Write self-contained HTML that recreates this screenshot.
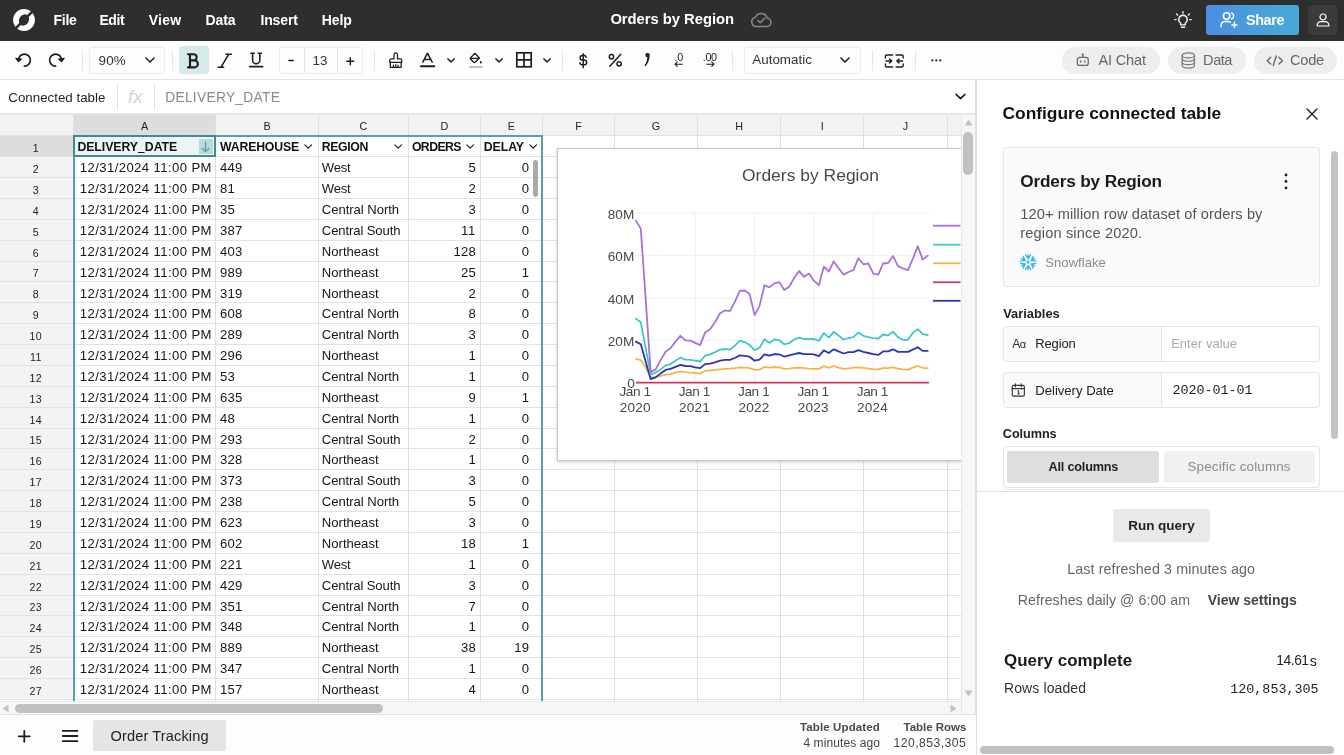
<!DOCTYPE html>
<html><head><meta charset="utf-8"><title>Orders by Region</title>
<style>
*{box-sizing:border-box;margin:0;padding:0}
html,body{width:1344px;height:755px;overflow:hidden;background:#fff}
body{font-family:"Liberation Sans",sans-serif;color:#1b1b1b;position:relative;font-size:13px}
.abs{position:absolute}
.t{position:absolute;white-space:nowrap;line-height:1}
#topbar{position:absolute;left:0;top:0;width:1344px;height:40.500px;background:#2e2e2e}
#topbar .m{position:absolute;top:12px;color:#fff;font-weight:bold;font-size:14.5px;line-height:16px;white-space:nowrap}
#toolbar{position:absolute;left:0;top:41px;width:1344px;height:39px;background:#fdfdfd;border-bottom:1px solid #e3e3e3}
.sep{position:absolute;top:6px;width:1px;height:26px;background:#e4e4e4}
.box{position:absolute;top:6px;height:27px;border:1px solid #ebebeb;border-radius:3px;background:#fdfdfd}
.pill{position:absolute;top:6px;height:27px;border-radius:14px;background:#eeeeee;color:#666;font-size:15px}
svg{position:absolute;overflow:visible}
#fbar{position:absolute;left:0;top:80px;width:976px;height:35px;background:#fff}
#grid{position:absolute;left:0;top:114px;width:976px;height:601px;background:#fff;overflow:hidden}
.hl{position:absolute;left:0;height:1px;background:#e2e2e2}
.vl{position:absolute;width:1px;background:#dfdfdf}
.cell{position:absolute;white-space:nowrap;font-size:13.6px;line-height:1;color:#222}
.rn{position:absolute;left:0;width:73px;text-align:center;font-size:11.5px;line-height:1;color:#222;padding-left:0}
.ch{position:absolute;top:122px;font-size:11px;line-height:1;color:#222;text-align:center}
.hd{position:absolute;white-space:nowrap;font-size:13.4px;font-weight:bold;line-height:1;color:#111}
#panel{position:absolute;left:976px;top:80px;width:368px;height:675px;background:#fff;border-left:1px solid #dcdcdc}
#bbar{position:absolute;left:0;top:715px;width:976px;height:40px;background:#fdfdfd;border-top:1px solid #e1e1e1}
</style></head><body>
<div id="root" style="position:absolute;left:0;top:0;width:1344px;height:755px;will-change:transform">
<div id="topbar"><svg style="left:12.800px;top:8.700px" width="22" height="22" viewBox="-11 -11 22 22">
<circle cx="0" cy="0" r="10.9" fill="#fff"/><ellipse cx="0" cy="0" rx="4.800" ry="5.900" transform="rotate(30)" fill="#2e2e2e"/>
<path d="M-9.200 7.400 L7.400 -9.200 L9.200 -7.400 L-7.400 9.200 Z" fill="#2e2e2e"/></svg><div class="t" style="left:53.6px;top:12.75px;font-size:14px;font-weight:bold;letter-spacing:-0.279px;color:#fff;">File</div><div class="t" style="left:99.4px;top:12.75px;font-size:14px;font-weight:bold;letter-spacing:-0.386px;color:#fff;">Edit</div><div class="t" style="left:148.8px;top:12.75px;font-size:14px;font-weight:bold;letter-spacing:0.212px;color:#fff;">View</div><div class="t" style="left:205.6px;top:12.75px;font-size:14px;font-weight:bold;letter-spacing:-0.137px;color:#fff;">Data</div><div class="t" style="left:260.4px;top:12.75px;font-size:14px;font-weight:bold;letter-spacing:-0.104px;color:#fff;">Insert</div><div class="t" style="left:321.7px;top:12.75px;font-size:14px;font-weight:bold;letter-spacing:-0.035px;color:#fff;">Help</div><div class="t" style="left:610.4px;top:12.07px;font-size:14.8px;font-weight:bold;letter-spacing:-0.030px;color:#fff;">Orders by Region</div><svg style="left:750px;top:10px" width="22" height="18" viewBox="0 0 22 18" fill="none" stroke="#8a8a8a" stroke-width="1.5" stroke-linecap="round" stroke-linejoin="round">
<path d="M6 16.5 H16.5 A4.2 4.2 0 0 0 17 8.1 A6 6 0 0 0 5.6 7.2 A4.7 4.7 0 0 0 6 16.5 Z"/>
<path d="M8 10.5 l2.3 2.3 l4.2-4.4"/></svg><svg style="left:1174px;top:11px" width="18" height="20" viewBox="0 0 18 20" fill="none" stroke="#f2f2f2" stroke-width="1.4" stroke-linecap="round" stroke-linejoin="round">
<path d="M9 4.2 a4.3 4.3 0 0 1 2.3 7.9 v1.8 h-4.6 v-1.8 A4.3 4.3 0 0 1 9 4.2 Z"/>
<path d="M7.3 16.2 h3.4"/>
<path d="M9 0.8 v1.4 M2.6 3 l1 1 M15.4 3 l-1 1 M0.8 8.6 h1.4 M15.8 8.6 h1.4"/></svg><div class="abs" style="left:1206px;top:5px;width:93px;height:30px;border-radius:3px;background:linear-gradient(90deg,#4a90e2,#4aa9d6)"></div>
<svg style="left:1220px;top:11px" width="19" height="18" viewBox="0 0 19 18" fill="none" stroke="#fff" stroke-width="1.5" stroke-linecap="round" stroke-linejoin="round">
<circle cx="6.6" cy="5" r="3.2"/><path d="M1 15.8 v-1.4 a4 4 0 0 1 4-4 h3.2 a4 4 0 0 1 2.2 .7"/>
<path d="M11.6 2 a3.2 3.2 0 0 1 0 6"/><path d="M14.4 11.6 v5 M11.9 14.1 h5"/></svg>
<div class="t" style="left:1245.9px;top:12.61px;font-size:14.4px;font-weight:bold;letter-spacing:-0.345px;color:#fff;">Share</div><div class="abs" style="left:1308px;top:5px;width:29px;height:30px;border-radius:3px;background:#3b3b3b"></div>
<svg style="left:1316px;top:13px" width="14" height="14" viewBox="0 0 14 14" fill="none" stroke="#fff" stroke-width="1.2" stroke-linecap="round" stroke-linejoin="round">
<circle cx="7" cy="4" r="3"/><path d="M1.2 13 v-.8 a3.6 3.6 0 0 1 3.6-3.6 h4.4 a3.6 3.6 0 0 1 3.6 3.6 v.8 Z"/></svg></div><div id="toolbar"><svg style="left:14px;top:11px" width="20" height="18" viewBox="0 0 20 18" fill="none" stroke="#1e1e1e" stroke-width="1.7" stroke-linecap="round" stroke-linejoin="round">
<path d="M4.4 8.1 A6 6 0 1 1 10.4 14.1"/><path d="M1.900 6.300 L4.400 9.700 L7.300 7.100 Z" fill="#1e1e1e" stroke-width="1.200"/></svg><svg style="left:46px;top:11px" width="20" height="18" viewBox="0 0 20 18" fill="none" stroke="#1e1e1e" stroke-width="1.7" stroke-linecap="round" stroke-linejoin="round">
<path d="M15.600 8.100 A6 6 0 1 0 9.600 14.100"/><path d="M18.100 6.300 L15.600 9.700 L12.700 7.100 Z" fill="#1e1e1e" stroke-width="1.200"/></svg><div class="abs" style="left:82px;top:9px;width:1px;height:21px;background:#e6e6e6"></div><div class="box" style="left:89px;width:75.5px"></div><div class="t" style="left:98.5px;top:13.06px;font-size:13.4px;letter-spacing:0.227px;color:#333;">90%</div><svg style="left:145px;top:16.4px" width="10" height="6.00" viewBox="0 0 10 6" fill="none" stroke="#1e1e1e" stroke-width="1.50" stroke-linecap="round" stroke-linejoin="round"><path d="M1 1 L5 5 L9 1"/></svg><div class="abs" style="left:172px;top:9px;width:1px;height:21px;background:#e6e6e6"></div><div class="abs" style="left:179px;top:4.7px;width:29.7px;height:28.5px;border-radius:3px;background:#d6e9eb"></div><svg style="left:187px;top:11.6px" width="12.4" height="15.6" viewBox="0 0 12.400 15.600" fill="none" stroke="#1e1e1e" stroke-width="2.1" stroke-linejoin="round" stroke-linecap="round">
<path d="M3 1.2 V14.4 M1 1.2 H6.6 a3.100 3.100 0 0 1 0 6.200 H3 M3 7.400 H7.400 a3.500 3.500 0 0 1 0 7 H1"/></svg><svg style="left:217px;top:11.600px" width="15.600" height="15.600" viewBox="0 0 15.600 15.600" fill="none" stroke="#1e1e1e" stroke-width="1.600" stroke-linecap="round">
<path d="M9 1.300 h5.400 M1.200 14.300 h5.400 M11.700 1.300 L3.900 14.300"/></svg><svg style="left:249px;top:11.400px" width="14.400" height="16" viewBox="0 0 14.400 16" fill="none" stroke="#1e1e1e" stroke-width="1.600" stroke-linecap="round">
<path d="M3.600 1.200 v7 a3.600 3.600 0 0 0 7.200 0 v-7 M2 1.200 h3.200 M9.200 1.200 h3.200"/><path d="M.8 14.600 h12.800" stroke-width="1.800"/></svg><div class="box" style="left:278.500px;width:84.500px"></div><div class="abs" style="left:303.500px;top:7px;width:1px;height:25px;background:#e6e6e6"></div><div class="abs" style="left:337px;top:7px;width:1px;height:25px;background:#e6e6e6"></div><svg style="left:288px;top:18px" width="6" height="3" viewBox="0 0 6 3" fill="none" stroke="#1e1e1e" stroke-width="1.600" stroke-linecap="round"><path d="M.9 1.500 h4.200"/></svg><div class="t" style="left:312.6px;top:12.76px;font-size:13.4px;letter-spacing:-0.053px;color:#333;">13</div><svg style="left:345.800px;top:15.800px" width="8.600" height="8.600" viewBox="0 0 8.600 8.600" fill="none" stroke="#1e1e1e" stroke-width="1.500" stroke-linecap="round"><path d="M4.300 .8 v7 M.8 4.300 h7"/></svg><div class="abs" style="left:374px;top:9px;width:1px;height:21px;background:#e6e6e6"></div><svg style="left:387.600px;top:10.600px" width="15.500" height="16.500" viewBox="0 0 16 17" fill="none" stroke="#1e1e1e" stroke-width="1.300" stroke-linejoin="round" stroke-linecap="round">
<path d="M6.200 7.200 v-4.400 a1.800 1.800 0 0 1 3.600 0 v4.400 h3 a1.400 1.400 0 0 1 1.400 1.400 v2.200 h-12.400 v-2.200 a1.400 1.400 0 0 1 1.400-1.400 Z"/>
<path d="M2.400 10.800 v5 h11.200 v-5"/><path d="M5.600 15.600 v-2 M8 15.600 v-2.600 M10.400 15.600 v-2"/></svg><svg style="left:420px;top:11.300px" width="15" height="16.500" viewBox="0 0 15 16.500" fill="none" stroke="#1e1e1e" stroke-width="1.500" stroke-linecap="round" stroke-linejoin="round">
<path d="M2.800 10.200 L7.500 1.200 L12.200 10.200 M4.300 7.400 h6.400"/><path d="M1 14.300 h13.200" stroke-width="2.100"/></svg><svg style="left:446.5px;top:16.6px" width="8" height="4.80" viewBox="0 0 10 6" fill="none" stroke="#1e1e1e" stroke-width="1.88" stroke-linecap="round" stroke-linejoin="round"><path d="M1 1 L5 5 L9 1"/></svg><svg style="left:469px;top:10.500px" width="14" height="17" viewBox="0 0 17 20.600" fill="none" stroke="#1e1e1e" stroke-width="1.600" stroke-linecap="round" stroke-linejoin="round">
<path d="M7 1.600 L12.600 7.200 L7.400 12.400 a1.200 1.200 0 0 1 -1.700 0 L2 8.700 a1.200 1.200 0 0 1 0-1.700 Z"/><path d="M2.200 7.800 h9.800"/>
<path d="M14.400 10.200 c.8 1.200 1.200 1.800 1.200 2.400 a1.200 1.200 0 0 1 -2.400 0 c0-.6 .4-1.200 1.200-2.400 Z" fill="#1e1e1e" stroke="none"/>
<path d="M1 18.200 h14.400" stroke="#c0c0c0" stroke-width="2.400"/></svg><svg style="left:494.5px;top:16.6px" width="8" height="4.80" viewBox="0 0 10 6" fill="none" stroke="#1e1e1e" stroke-width="1.88" stroke-linecap="round" stroke-linejoin="round"><path d="M1 1 L5 5 L9 1"/></svg><svg style="left:516.200px;top:10.700px" width="16" height="15.600" viewBox="0 0 16 15.600" fill="none" stroke="#1e1e1e" stroke-width="1.700" stroke-linejoin="miter">
<rect x=".8" y=".8" width="14.400" height="14" /><path d="M8 .8 v14 M.8 7.800 h14.400"/></svg><svg style="left:543px;top:16.6px" width="8" height="4.80" viewBox="0 0 10 6" fill="none" stroke="#1e1e1e" stroke-width="1.88" stroke-linecap="round" stroke-linejoin="round"><path d="M1 1 L5 5 L9 1"/></svg><div class="abs" style="left:562px;top:9px;width:1px;height:21px;background:#e6e6e6"></div><svg style="left:579.400px;top:11.600px" width="8.400" height="15.400" viewBox="0 0 10 19" fill="none" stroke="#1e1e1e" stroke-width="1.800" stroke-linecap="round" stroke-linejoin="round">
<path d="M5 .8 v17.400 M8.600 5.400 a2.600 2.600 0 0 0 -2.600-2.400 h-2 a2.800 2.800 0 0 0 0 5.600 h2.200 a3 3 0 0 1 0 6 h-2.400 a2.800 2.800 0 0 1 -2.800-2.600"/></svg><svg style="left:608px;top:12px" width="14.600" height="14.600" viewBox="0 0 16 15" fill="none" stroke="#1e1e1e" stroke-width="1.600" stroke-linecap="round">
<path d="M14 1 L2 14"/><circle cx="3.800" cy="3.600" r="2.400"/><circle cx="12.200" cy="11.400" r="2.400"/></svg><svg style="left:642.600px;top:11.400px" width="8" height="15.400" viewBox="0 0 8 17" fill="#1e1e1e" stroke="none">
<path d="M4.600 1 a2.300 2.300 0 0 1 2.400 2.500 c0 4.600-2 9-4.600 12.300 l-1.200-.8 c1.800-2.700 3-5.700 3.200-9.200 a2.300 2.300 0 0 1 -2.200-2.300 a2.300 2.300 0 0 1 2.400-2.500 Z"/></svg><div class="t" style="left:674.600px;top:10.800px;font-size:10.800px;letter-spacing:-.4px;color:#1e1e1e">.0</div>
<svg style="left:674px;top:20.400px" width="9" height="6.400" viewBox="0 0 10 7" fill="none" stroke="#1e1e1e" stroke-width="1.200" stroke-linecap="round" stroke-linejoin="round"><path d="M9.200 3.500 h-8 M3.600 1 L1.100 3.500 L3.600 6"/></svg>
<div class="t" style="left:702.800px;top:10.800px;font-size:10.800px;letter-spacing:-.4px;color:#1e1e1e">.00</div>
<svg style="left:706.400px;top:20.400px" width="9" height="6.400" viewBox="0 0 10 7" fill="none" stroke="#1e1e1e" stroke-width="1.200" stroke-linecap="round" stroke-linejoin="round"><path d="M.8 3.500 h8 M6.400 1 L8.900 3.500 L6.400 6"/></svg><div class="abs" style="left:732px;top:9px;width:1px;height:21px;background:#e6e6e6"></div><div class="box" style="left:743.500px;width:117.500px"></div><div class="t" style="left:752.2px;top:12.16px;font-size:13.4px;letter-spacing:0.035px;color:#333;">Automatic</div><svg style="left:840.3px;top:16.2px" width="10" height="6.00" viewBox="0 0 10 6" fill="none" stroke="#1e1e1e" stroke-width="1.60" stroke-linecap="round" stroke-linejoin="round"><path d="M1 1 L5 5 L9 1"/></svg><div class="abs" style="left:872px;top:9px;width:1px;height:21px;background:#e6e6e6"></div><svg style="left:884px;top:12.600px" width="20.600" height="14" viewBox="0 0 21 15" fill="none" stroke="#1e1e1e" stroke-width="1.500" stroke-linecap="round" stroke-linejoin="round">
<path d="M1 4.400 v-2 a1.400 1.400 0 0 1 1.400-1.400 h6.200 M12.400 1 h6.200 a1.400 1.400 0 0 1 1.400 1.400 v2"/>
<path d="M1 10.600 v2 a1.400 1.400 0 0 0 1.400 1.400 h6.200 M12.400 14 h6.200 a1.400 1.400 0 0 0 1.400-1.400 v-2"/>
<path d="M1.600 7.500 h6 M5.400 5.300 L7.800 7.500 L5.400 9.700"/><path d="M19.400 7.500 h-6 M15.600 5.300 L13.200 7.500 L15.600 9.700"/></svg><div class="abs" style="left:915px;top:9px;width:1px;height:21px;background:#e6e6e6"></div><svg style="left:931.400px;top:18px" width="10.600" height="2.600" viewBox="0 0 10.600 2.600" fill="#1e1e1e"><circle cx="1.300" cy="1.300" r="1.150"/><circle cx="5.300" cy="1.300" r="1.150"/><circle cx="9.300" cy="1.300" r="1.150"/></svg><div class="pill" style="left:1062px;width:98px"></div><svg style="left:1076.400px;top:12px" width="13.600" height="14" viewBox="0 0 16 16" fill="none" stroke="#6a6a6a" stroke-width="1.500" stroke-linecap="round" stroke-linejoin="round">
<rect x="1.600" y="5" width="12.800" height="9.400" rx="2.600"/><path d="M8 5 v-3"/><path d="M5.600 9 v1.600 M10.400 9 v1.600"/><circle cx="8" cy="1.600" r=".6" fill="#6a6a6a"/></svg><div class="t" style="left:1098.6px;top:12.34px;font-size:14.6px;letter-spacing:-0.213px;color:#666;">AI Chat</div><div class="pill" style="left:1168px;width:78px"></div><svg style="left:1181px;top:10.600px" width="14.600" height="17" viewBox="0 0 15 18" fill="none" stroke="#7a7a7a" stroke-width="1.300" stroke-linecap="round" stroke-linejoin="round">
<ellipse cx="7.500" cy="3.600" rx="6.500" ry="2.600"/><path d="M1 3.600 v10.800 c0 1.400 2.900 2.600 6.500 2.600 s6.500-1.200 6.500-2.600 v-10.800"/>
<path d="M1 7.200 c0 1.400 2.900 2.600 6.500 2.600 s6.500-1.200 6.500-2.600 M1 10.800 c0 1.400 2.900 2.600 6.500 2.600 s6.500-1.200 6.500-2.600"/></svg><div class="t" style="left:1203.1px;top:12.34px;font-size:14.6px;letter-spacing:-0.485px;color:#666;">Data</div><div class="pill" style="left:1254px;width:83px"></div><svg style="left:1266px;top:13.600px" width="17.600" height="11.400" viewBox="0 0 18 12" fill="none" stroke="#6a6a6a" stroke-width="1.500" stroke-linecap="round" stroke-linejoin="round">
<path d="M4.600 2.400 L1 6 L4.600 9.600 M13.400 2.400 L17 6 L13.400 9.600 M10.600 1 L7.400 11"/></svg><div class="t" style="left:1290px;top:12.34px;font-size:14.6px;letter-spacing:-0.251px;color:#666;">Code</div></div><div id="fbar"><div class="t" style="left:8.3px;top:10.94px;font-size:13.3px;letter-spacing:0.015px;color:#1e1e1e;">Connected table</div><div class="abs" style="left:117px;top:4px;width:1px;height:26px;background:#e2e2e2"></div><div class="t" style="left:128px;top:6.5px;font-size:19px;font-style:italic;color:#d2d2d2">fx</div><div class="abs" style="left:154px;top:4px;width:1px;height:26px;background:#e2e2e2"></div><div class="t" style="left:165.2px;top:10.52px;font-size:13.8px;letter-spacing:0.272px;color:#8a8a8a;">DELIVERY_DATE</div><svg style="left:955px;top:13px" width="11" height="7" viewBox="0 0 10 6" fill="none" stroke="#1e1e1e" stroke-width="1.5" stroke-linecap="round" stroke-linejoin="round"><path d="M1 1 L5 5 L9 1"/></svg></div><div class="abs" style="left:0;top:113.300px;width:976px;height:1.700px;background:#e4e4e4"></div><div class="abs" style="left:0;top:115px;width:960.5px;height:20.4px;background:#f3f3f3"></div><div class="abs" style="left:0;top:135.4px;width:73.6px;height:565px;background:#f3f3f3"></div><div class="abs" style="left:73.6px;top:115px;width:142.2px;height:20.4px;background:#dddddd"></div><div class="abs" style="left:0;top:135.4px;width:73.6px;height:20.87px;background:#dddddd"></div><div class="hl" style="top:135.40px;width:960.500px"></div><div class="hl" style="top:156.27px;width:960.500px"></div><div class="hl" style="top:177.14px;width:960.500px"></div><div class="hl" style="top:198.01px;width:960.500px"></div><div class="hl" style="top:218.88px;width:960.500px"></div><div class="hl" style="top:239.75px;width:960.500px"></div><div class="hl" style="top:260.62px;width:960.500px"></div><div class="hl" style="top:281.49px;width:960.500px"></div><div class="hl" style="top:302.36px;width:960.500px"></div><div class="hl" style="top:323.23px;width:960.500px"></div><div class="hl" style="top:344.10px;width:960.500px"></div><div class="hl" style="top:364.97px;width:960.500px"></div><div class="hl" style="top:385.84px;width:960.500px"></div><div class="hl" style="top:406.71px;width:960.500px"></div><div class="hl" style="top:427.58px;width:960.500px"></div><div class="hl" style="top:448.45px;width:960.500px"></div><div class="hl" style="top:469.32px;width:960.500px"></div><div class="hl" style="top:490.19px;width:960.500px"></div><div class="hl" style="top:511.06px;width:960.500px"></div><div class="hl" style="top:531.93px;width:960.500px"></div><div class="hl" style="top:552.80px;width:960.500px"></div><div class="hl" style="top:573.67px;width:960.500px"></div><div class="hl" style="top:594.54px;width:960.500px"></div><div class="hl" style="top:615.41px;width:960.500px"></div><div class="hl" style="top:636.28px;width:960.500px"></div><div class="hl" style="top:657.15px;width:960.500px"></div><div class="hl" style="top:678.02px;width:960.500px"></div><div class="hl" style="top:698.89px;width:960.500px"></div><div class="vl" style="left:73.1px;top:115px;height:585.5px"></div><div class="vl" style="left:215.3px;top:115px;height:585.5px"></div><div class="vl" style="left:317.7px;top:115px;height:585.5px"></div><div class="vl" style="left:407.9px;top:115px;height:585.5px"></div><div class="vl" style="left:479.7px;top:115px;height:585.5px"></div><div class="vl" style="left:542.1px;top:115px;height:585.5px"></div><div class="vl" style="left:613.8px;top:115px;height:585.5px"></div><div class="vl" style="left:697.0px;top:115px;height:585.5px"></div><div class="vl" style="left:780.2px;top:115px;height:585.5px"></div><div class="vl" style="left:863.4px;top:115px;height:585.5px"></div><div class="vl" style="left:946.6px;top:115px;height:585.5px"></div><div class="t" style="left:141.1px;top:121.06px;font-size:10.8px;letter-spacing:0.000px;color:#222;">A</div><div class="t" style="left:263.4px;top:121.06px;font-size:10.8px;letter-spacing:0.000px;color:#222;">B</div><div class="t" style="left:359.4px;top:121.06px;font-size:10.8px;letter-spacing:0.000px;color:#222;">C</div><div class="t" style="left:440.4px;top:121.06px;font-size:10.8px;letter-spacing:0.000px;color:#222;">D</div><div class="t" style="left:507.8px;top:121.06px;font-size:10.8px;letter-spacing:0.000px;color:#222;">E</div><div class="t" style="left:575.15px;top:121.06px;font-size:10.8px;letter-spacing:0.000px;color:#222;">F</div><div class="t" style="left:651.7px;top:121.06px;font-size:10.8px;letter-spacing:0.000px;color:#222;">G</div><div class="t" style="left:735.2px;top:121.06px;font-size:10.8px;letter-spacing:0.000px;color:#222;">H</div><div class="t" style="left:820.8px;top:121.06px;font-size:10.8px;letter-spacing:0.000px;color:#222;">I</div><div class="t" style="left:902.8px;top:121.06px;font-size:10.8px;letter-spacing:0.000px;color:#222;">J</div><div class="t" style="left:32.7px;top:143.23px;font-size:10.6px;letter-spacing:0.300px;color:#222;">1</div><div class="t" style="left:32.7px;top:164.1px;font-size:10.6px;letter-spacing:0.300px;color:#222;">2</div><div class="t" style="left:32.7px;top:184.97px;font-size:10.6px;letter-spacing:0.300px;color:#222;">3</div><div class="t" style="left:32.7px;top:205.84px;font-size:10.6px;letter-spacing:0.300px;color:#222;">4</div><div class="t" style="left:32.7px;top:226.71px;font-size:10.6px;letter-spacing:0.300px;color:#222;">5</div><div class="t" style="left:32.7px;top:247.58px;font-size:10.6px;letter-spacing:0.300px;color:#222;">6</div><div class="t" style="left:32.7px;top:268.45px;font-size:10.6px;letter-spacing:0.300px;color:#222;">7</div><div class="t" style="left:32.7px;top:289.32px;font-size:10.6px;letter-spacing:0.300px;color:#222;">8</div><div class="t" style="left:32.7px;top:310.19px;font-size:10.6px;letter-spacing:0.300px;color:#222;">9</div><div class="t" style="left:29.6px;top:331.06px;font-size:10.6px;letter-spacing:0.300px;color:#222;">10</div><div class="t" style="left:30.0px;top:351.93px;font-size:10.6px;letter-spacing:0.300px;color:#222;">11</div><div class="t" style="left:29.6px;top:372.8px;font-size:10.6px;letter-spacing:0.300px;color:#222;">12</div><div class="t" style="left:29.6px;top:393.67px;font-size:10.6px;letter-spacing:0.300px;color:#222;">13</div><div class="t" style="left:29.6px;top:414.54px;font-size:10.6px;letter-spacing:0.300px;color:#222;">14</div><div class="t" style="left:29.6px;top:435.41px;font-size:10.6px;letter-spacing:0.300px;color:#222;">15</div><div class="t" style="left:29.6px;top:456.28px;font-size:10.6px;letter-spacing:0.300px;color:#222;">16</div><div class="t" style="left:29.6px;top:477.15px;font-size:10.6px;letter-spacing:0.300px;color:#222;">17</div><div class="t" style="left:29.6px;top:498.02px;font-size:10.6px;letter-spacing:0.300px;color:#222;">18</div><div class="t" style="left:29.6px;top:518.89px;font-size:10.6px;letter-spacing:0.300px;color:#222;">19</div><div class="t" style="left:29.6px;top:539.76px;font-size:10.6px;letter-spacing:0.300px;color:#222;">20</div><div class="t" style="left:29.6px;top:560.63px;font-size:10.6px;letter-spacing:0.300px;color:#222;">21</div><div class="t" style="left:29.6px;top:581.5px;font-size:10.6px;letter-spacing:0.300px;color:#222;">22</div><div class="t" style="left:29.6px;top:602.37px;font-size:10.6px;letter-spacing:0.300px;color:#222;">23</div><div class="t" style="left:29.6px;top:623.24px;font-size:10.6px;letter-spacing:0.300px;color:#222;">24</div><div class="t" style="left:29.6px;top:644.11px;font-size:10.6px;letter-spacing:0.300px;color:#222;">25</div><div class="t" style="left:29.6px;top:664.98px;font-size:10.6px;letter-spacing:0.300px;color:#222;">26</div><div class="t" style="left:29.6px;top:685.85px;font-size:10.6px;letter-spacing:0.300px;color:#222;">27</div><div class="abs" style="left:74px;top:135.4px;width:142px;height:20.87px;background:#ebf5f6"></div><div class="abs" style="left:198.6px;top:139.1px;width:14.2px;height:15.3px;background:#b9dadd"></div><svg style="left:201.2px;top:141.2px" width="9" height="11.6" viewBox="0 0 10 13" fill="none" stroke="#4a9aa0" stroke-width="1.3" stroke-linecap="round" stroke-linejoin="round"><path d="M5 1 v11 M1.200 8.200 L5 12 L8.800 8.200"/></svg><div class="t" style="left:77.4px;top:141.29px;font-size:12.3px;font-weight:bold;letter-spacing:-0.052px;color:#111;">DELIVERY_DATE</div><div class="t" style="left:220px;top:141.29px;font-size:12.3px;font-weight:bold;letter-spacing:-0.183px;color:#111;">WAREHOUSE</div><svg style="left:304.3px;top:144.4px" width="8.4" height="5" viewBox="0 0 10 6" fill="none" stroke="#222" stroke-width="1.500" stroke-linecap="round" stroke-linejoin="round"><path d="M1 1 L5 5 L9 1"/></svg><div class="t" style="left:321.8px;top:141.29px;font-size:12.3px;font-weight:bold;letter-spacing:-0.387px;color:#111;">REGION</div><svg style="left:394.3px;top:144.4px" width="8.4" height="5" viewBox="0 0 10 6" fill="none" stroke="#222" stroke-width="1.500" stroke-linecap="round" stroke-linejoin="round"><path d="M1 1 L5 5 L9 1"/></svg><div class="t" style="left:411.9px;top:141.29px;font-size:12.3px;font-weight:bold;letter-spacing:-0.587px;color:#111;">ORDERS</div><svg style="left:466.4px;top:144.4px" width="8.4" height="5" viewBox="0 0 10 6" fill="none" stroke="#222" stroke-width="1.500" stroke-linecap="round" stroke-linejoin="round"><path d="M1 1 L5 5 L9 1"/></svg><div class="t" style="left:483.8px;top:141.29px;font-size:12.3px;font-weight:bold;letter-spacing:-0.072px;color:#111;">DELAY</div><svg style="left:528.5px;top:144.4px" width="8.4" height="5" viewBox="0 0 10 6" fill="none" stroke="#222" stroke-width="1.500" stroke-linecap="round" stroke-linejoin="round"><path d="M1 1 L5 5 L9 1"/></svg><div class="abs" style="left:138.3px;top:151.6px;width:5.5px;height:1.4px;background:#111"></div><div class="t" style="left:79.8px;top:161.28px;font-size:13.1px;letter-spacing:0.415px;color:#151515;">12/31/2024 11:00 PM</div><div class="t" style="left:220px;top:161.28px;font-size:13.1px;letter-spacing:0.214px;color:#151515;">449</div><div class="t" style="left:321.8px;top:161.28px;font-size:13.1px;letter-spacing:-0.226px;color:#151515;">West</div><div class="t" style="left:468.6px;top:161.28px;font-size:13.1px;letter-spacing:0.214px;color:#151515;">5</div><div class="t" style="left:521.7px;top:161.28px;font-size:13.1px;letter-spacing:0.214px;color:#151515;">0</div><div class="t" style="left:79.8px;top:182.15px;font-size:13.1px;letter-spacing:0.415px;color:#151515;">12/31/2024 11:00 PM</div><div class="t" style="left:220px;top:182.15px;font-size:13.1px;letter-spacing:0.214px;color:#151515;">81</div><div class="t" style="left:321.8px;top:182.15px;font-size:13.1px;letter-spacing:-0.226px;color:#151515;">West</div><div class="t" style="left:468.6px;top:182.15px;font-size:13.1px;letter-spacing:0.214px;color:#151515;">2</div><div class="t" style="left:521.7px;top:182.15px;font-size:13.1px;letter-spacing:0.214px;color:#151515;">0</div><div class="t" style="left:79.8px;top:203.02px;font-size:13.1px;letter-spacing:0.415px;color:#151515;">12/31/2024 11:00 PM</div><div class="t" style="left:220px;top:203.02px;font-size:13.1px;letter-spacing:0.214px;color:#151515;">35</div><div class="t" style="left:321.8px;top:203.02px;font-size:13.1px;letter-spacing:-0.047px;color:#151515;">Central North</div><div class="t" style="left:468.6px;top:203.02px;font-size:13.1px;letter-spacing:0.214px;color:#151515;">3</div><div class="t" style="left:521.7px;top:203.02px;font-size:13.1px;letter-spacing:0.214px;color:#151515;">0</div><div class="t" style="left:79.8px;top:223.89px;font-size:13.1px;letter-spacing:0.415px;color:#151515;">12/31/2024 11:00 PM</div><div class="t" style="left:220px;top:223.89px;font-size:13.1px;letter-spacing:0.214px;color:#151515;">387</div><div class="t" style="left:321.8px;top:223.89px;font-size:13.1px;letter-spacing:-0.116px;color:#151515;">Central South</div><div class="t" style="left:461.1px;top:223.89px;font-size:13.1px;letter-spacing:0.700px;color:#151515;">11</div><div class="t" style="left:521.7px;top:223.89px;font-size:13.1px;letter-spacing:0.214px;color:#151515;">0</div><div class="t" style="left:79.8px;top:244.76px;font-size:13.1px;letter-spacing:0.415px;color:#151515;">12/31/2024 11:00 PM</div><div class="t" style="left:220px;top:244.76px;font-size:13.1px;letter-spacing:0.214px;color:#151515;">403</div><div class="t" style="left:321.8px;top:244.76px;font-size:13.1px;letter-spacing:0.000px;color:#151515;">Northeast</div><div class="t" style="left:453.6px;top:244.76px;font-size:13.1px;letter-spacing:0.214px;color:#151515;">128</div><div class="t" style="left:521.7px;top:244.76px;font-size:13.1px;letter-spacing:0.214px;color:#151515;">0</div><div class="t" style="left:79.8px;top:265.63px;font-size:13.1px;letter-spacing:0.415px;color:#151515;">12/31/2024 11:00 PM</div><div class="t" style="left:220px;top:265.63px;font-size:13.1px;letter-spacing:0.214px;color:#151515;">989</div><div class="t" style="left:321.8px;top:265.63px;font-size:13.1px;letter-spacing:0.000px;color:#151515;">Northeast</div><div class="t" style="left:461.1px;top:265.63px;font-size:13.1px;letter-spacing:0.214px;color:#151515;">25</div><div class="t" style="left:521.7px;top:265.63px;font-size:13.1px;letter-spacing:0.214px;color:#151515;">1</div><div class="t" style="left:79.8px;top:286.5px;font-size:13.1px;letter-spacing:0.415px;color:#151515;">12/31/2024 11:00 PM</div><div class="t" style="left:220px;top:286.5px;font-size:13.1px;letter-spacing:0.214px;color:#151515;">319</div><div class="t" style="left:321.8px;top:286.5px;font-size:13.1px;letter-spacing:0.000px;color:#151515;">Northeast</div><div class="t" style="left:468.6px;top:286.5px;font-size:13.1px;letter-spacing:0.214px;color:#151515;">2</div><div class="t" style="left:521.7px;top:286.5px;font-size:13.1px;letter-spacing:0.214px;color:#151515;">0</div><div class="t" style="left:79.8px;top:307.37px;font-size:13.1px;letter-spacing:0.415px;color:#151515;">12/31/2024 11:00 PM</div><div class="t" style="left:220px;top:307.37px;font-size:13.1px;letter-spacing:0.214px;color:#151515;">608</div><div class="t" style="left:321.8px;top:307.37px;font-size:13.1px;letter-spacing:-0.047px;color:#151515;">Central North</div><div class="t" style="left:468.6px;top:307.37px;font-size:13.1px;letter-spacing:0.214px;color:#151515;">8</div><div class="t" style="left:521.7px;top:307.37px;font-size:13.1px;letter-spacing:0.214px;color:#151515;">0</div><div class="t" style="left:79.8px;top:328.24px;font-size:13.1px;letter-spacing:0.415px;color:#151515;">12/31/2024 11:00 PM</div><div class="t" style="left:220px;top:328.24px;font-size:13.1px;letter-spacing:0.214px;color:#151515;">289</div><div class="t" style="left:321.8px;top:328.24px;font-size:13.1px;letter-spacing:-0.047px;color:#151515;">Central North</div><div class="t" style="left:468.6px;top:328.24px;font-size:13.1px;letter-spacing:0.214px;color:#151515;">3</div><div class="t" style="left:521.7px;top:328.24px;font-size:13.1px;letter-spacing:0.214px;color:#151515;">0</div><div class="t" style="left:79.8px;top:349.11px;font-size:13.1px;letter-spacing:0.415px;color:#151515;">12/31/2024 11:00 PM</div><div class="t" style="left:220px;top:349.11px;font-size:13.1px;letter-spacing:0.214px;color:#151515;">296</div><div class="t" style="left:321.8px;top:349.11px;font-size:13.1px;letter-spacing:0.000px;color:#151515;">Northeast</div><div class="t" style="left:468.6px;top:349.11px;font-size:13.1px;letter-spacing:0.214px;color:#151515;">1</div><div class="t" style="left:521.7px;top:349.11px;font-size:13.1px;letter-spacing:0.214px;color:#151515;">0</div><div class="t" style="left:79.8px;top:369.98px;font-size:13.1px;letter-spacing:0.415px;color:#151515;">12/31/2024 11:00 PM</div><div class="t" style="left:220px;top:369.98px;font-size:13.1px;letter-spacing:0.214px;color:#151515;">53</div><div class="t" style="left:321.8px;top:369.98px;font-size:13.1px;letter-spacing:-0.047px;color:#151515;">Central North</div><div class="t" style="left:468.6px;top:369.98px;font-size:13.1px;letter-spacing:0.214px;color:#151515;">1</div><div class="t" style="left:521.7px;top:369.98px;font-size:13.1px;letter-spacing:0.214px;color:#151515;">0</div><div class="t" style="left:79.8px;top:390.85px;font-size:13.1px;letter-spacing:0.415px;color:#151515;">12/31/2024 11:00 PM</div><div class="t" style="left:220px;top:390.85px;font-size:13.1px;letter-spacing:0.214px;color:#151515;">635</div><div class="t" style="left:321.8px;top:390.85px;font-size:13.1px;letter-spacing:0.000px;color:#151515;">Northeast</div><div class="t" style="left:468.6px;top:390.85px;font-size:13.1px;letter-spacing:0.214px;color:#151515;">9</div><div class="t" style="left:521.7px;top:390.85px;font-size:13.1px;letter-spacing:0.214px;color:#151515;">1</div><div class="t" style="left:79.8px;top:411.72px;font-size:13.1px;letter-spacing:0.415px;color:#151515;">12/31/2024 11:00 PM</div><div class="t" style="left:220px;top:411.72px;font-size:13.1px;letter-spacing:0.214px;color:#151515;">48</div><div class="t" style="left:321.8px;top:411.72px;font-size:13.1px;letter-spacing:-0.047px;color:#151515;">Central North</div><div class="t" style="left:468.6px;top:411.72px;font-size:13.1px;letter-spacing:0.214px;color:#151515;">1</div><div class="t" style="left:521.7px;top:411.72px;font-size:13.1px;letter-spacing:0.214px;color:#151515;">0</div><div class="t" style="left:79.8px;top:432.59px;font-size:13.1px;letter-spacing:0.415px;color:#151515;">12/31/2024 11:00 PM</div><div class="t" style="left:220px;top:432.59px;font-size:13.1px;letter-spacing:0.214px;color:#151515;">293</div><div class="t" style="left:321.8px;top:432.59px;font-size:13.1px;letter-spacing:-0.116px;color:#151515;">Central South</div><div class="t" style="left:468.6px;top:432.59px;font-size:13.1px;letter-spacing:0.214px;color:#151515;">2</div><div class="t" style="left:521.7px;top:432.59px;font-size:13.1px;letter-spacing:0.214px;color:#151515;">0</div><div class="t" style="left:79.8px;top:453.46px;font-size:13.1px;letter-spacing:0.415px;color:#151515;">12/31/2024 11:00 PM</div><div class="t" style="left:220px;top:453.46px;font-size:13.1px;letter-spacing:0.214px;color:#151515;">328</div><div class="t" style="left:321.8px;top:453.46px;font-size:13.1px;letter-spacing:0.000px;color:#151515;">Northeast</div><div class="t" style="left:468.6px;top:453.46px;font-size:13.1px;letter-spacing:0.214px;color:#151515;">1</div><div class="t" style="left:521.7px;top:453.46px;font-size:13.1px;letter-spacing:0.214px;color:#151515;">0</div><div class="t" style="left:79.8px;top:474.33px;font-size:13.1px;letter-spacing:0.415px;color:#151515;">12/31/2024 11:00 PM</div><div class="t" style="left:220px;top:474.33px;font-size:13.1px;letter-spacing:0.214px;color:#151515;">373</div><div class="t" style="left:321.8px;top:474.33px;font-size:13.1px;letter-spacing:-0.116px;color:#151515;">Central South</div><div class="t" style="left:468.6px;top:474.33px;font-size:13.1px;letter-spacing:0.214px;color:#151515;">3</div><div class="t" style="left:521.7px;top:474.33px;font-size:13.1px;letter-spacing:0.214px;color:#151515;">0</div><div class="t" style="left:79.8px;top:495.2px;font-size:13.1px;letter-spacing:0.415px;color:#151515;">12/31/2024 11:00 PM</div><div class="t" style="left:220px;top:495.2px;font-size:13.1px;letter-spacing:0.214px;color:#151515;">238</div><div class="t" style="left:321.8px;top:495.2px;font-size:13.1px;letter-spacing:-0.047px;color:#151515;">Central North</div><div class="t" style="left:468.6px;top:495.2px;font-size:13.1px;letter-spacing:0.214px;color:#151515;">5</div><div class="t" style="left:521.7px;top:495.2px;font-size:13.1px;letter-spacing:0.214px;color:#151515;">0</div><div class="t" style="left:79.8px;top:516.07px;font-size:13.1px;letter-spacing:0.415px;color:#151515;">12/31/2024 11:00 PM</div><div class="t" style="left:220px;top:516.07px;font-size:13.1px;letter-spacing:0.214px;color:#151515;">623</div><div class="t" style="left:321.8px;top:516.07px;font-size:13.1px;letter-spacing:0.000px;color:#151515;">Northeast</div><div class="t" style="left:468.6px;top:516.07px;font-size:13.1px;letter-spacing:0.214px;color:#151515;">3</div><div class="t" style="left:521.7px;top:516.07px;font-size:13.1px;letter-spacing:0.214px;color:#151515;">0</div><div class="t" style="left:79.8px;top:536.94px;font-size:13.1px;letter-spacing:0.415px;color:#151515;">12/31/2024 11:00 PM</div><div class="t" style="left:220px;top:536.94px;font-size:13.1px;letter-spacing:0.214px;color:#151515;">602</div><div class="t" style="left:321.8px;top:536.94px;font-size:13.1px;letter-spacing:0.000px;color:#151515;">Northeast</div><div class="t" style="left:461.1px;top:536.94px;font-size:13.1px;letter-spacing:0.214px;color:#151515;">18</div><div class="t" style="left:521.7px;top:536.94px;font-size:13.1px;letter-spacing:0.214px;color:#151515;">1</div><div class="t" style="left:79.8px;top:557.81px;font-size:13.1px;letter-spacing:0.415px;color:#151515;">12/31/2024 11:00 PM</div><div class="t" style="left:220px;top:557.81px;font-size:13.1px;letter-spacing:0.214px;color:#151515;">221</div><div class="t" style="left:321.8px;top:557.81px;font-size:13.1px;letter-spacing:-0.226px;color:#151515;">West</div><div class="t" style="left:468.6px;top:557.81px;font-size:13.1px;letter-spacing:0.214px;color:#151515;">1</div><div class="t" style="left:521.7px;top:557.81px;font-size:13.1px;letter-spacing:0.214px;color:#151515;">0</div><div class="t" style="left:79.8px;top:578.68px;font-size:13.1px;letter-spacing:0.415px;color:#151515;">12/31/2024 11:00 PM</div><div class="t" style="left:220px;top:578.68px;font-size:13.1px;letter-spacing:0.214px;color:#151515;">429</div><div class="t" style="left:321.8px;top:578.68px;font-size:13.1px;letter-spacing:-0.116px;color:#151515;">Central South</div><div class="t" style="left:468.6px;top:578.68px;font-size:13.1px;letter-spacing:0.214px;color:#151515;">3</div><div class="t" style="left:521.7px;top:578.68px;font-size:13.1px;letter-spacing:0.214px;color:#151515;">0</div><div class="t" style="left:79.8px;top:599.55px;font-size:13.1px;letter-spacing:0.415px;color:#151515;">12/31/2024 11:00 PM</div><div class="t" style="left:220px;top:599.55px;font-size:13.1px;letter-spacing:0.214px;color:#151515;">351</div><div class="t" style="left:321.8px;top:599.55px;font-size:13.1px;letter-spacing:-0.047px;color:#151515;">Central North</div><div class="t" style="left:468.6px;top:599.55px;font-size:13.1px;letter-spacing:0.214px;color:#151515;">7</div><div class="t" style="left:521.7px;top:599.55px;font-size:13.1px;letter-spacing:0.214px;color:#151515;">0</div><div class="t" style="left:79.8px;top:620.42px;font-size:13.1px;letter-spacing:0.415px;color:#151515;">12/31/2024 11:00 PM</div><div class="t" style="left:220px;top:620.42px;font-size:13.1px;letter-spacing:0.214px;color:#151515;">348</div><div class="t" style="left:321.8px;top:620.42px;font-size:13.1px;letter-spacing:-0.047px;color:#151515;">Central North</div><div class="t" style="left:468.6px;top:620.42px;font-size:13.1px;letter-spacing:0.214px;color:#151515;">1</div><div class="t" style="left:521.7px;top:620.42px;font-size:13.1px;letter-spacing:0.214px;color:#151515;">0</div><div class="t" style="left:79.8px;top:641.29px;font-size:13.1px;letter-spacing:0.415px;color:#151515;">12/31/2024 11:00 PM</div><div class="t" style="left:220px;top:641.29px;font-size:13.1px;letter-spacing:0.214px;color:#151515;">889</div><div class="t" style="left:321.8px;top:641.29px;font-size:13.1px;letter-spacing:0.000px;color:#151515;">Northeast</div><div class="t" style="left:461.1px;top:641.29px;font-size:13.1px;letter-spacing:0.214px;color:#151515;">38</div><div class="t" style="left:514.2px;top:641.29px;font-size:13.1px;letter-spacing:0.214px;color:#151515;">19</div><div class="t" style="left:79.8px;top:662.16px;font-size:13.1px;letter-spacing:0.415px;color:#151515;">12/31/2024 11:00 PM</div><div class="t" style="left:220px;top:662.16px;font-size:13.1px;letter-spacing:0.214px;color:#151515;">347</div><div class="t" style="left:321.8px;top:662.16px;font-size:13.1px;letter-spacing:-0.047px;color:#151515;">Central North</div><div class="t" style="left:468.6px;top:662.16px;font-size:13.1px;letter-spacing:0.214px;color:#151515;">1</div><div class="t" style="left:521.7px;top:662.16px;font-size:13.1px;letter-spacing:0.214px;color:#151515;">0</div><div class="t" style="left:79.8px;top:683.03px;font-size:13.1px;letter-spacing:0.415px;color:#151515;">12/31/2024 11:00 PM</div><div class="t" style="left:220px;top:683.03px;font-size:13.1px;letter-spacing:0.214px;color:#151515;">157</div><div class="t" style="left:321.8px;top:683.03px;font-size:13.1px;letter-spacing:0.000px;color:#151515;">Northeast</div><div class="t" style="left:468.6px;top:683.03px;font-size:13.1px;letter-spacing:0.214px;color:#151515;">4</div><div class="t" style="left:521.7px;top:683.03px;font-size:13.1px;letter-spacing:0.214px;color:#151515;">0</div><div class="abs" style="left:73px;top:135.0px;width:470.4px;height:566px;border:2px solid #5a9fa5;border-bottom:none"></div><div class="abs" style="left:73.3px;top:135.20000000000002px;width:143.2px;height:22.07px;border:2px solid #3f8b91"></div><div class="abs" style="left:533.300px;top:159.500px;width:4.700px;height:37px;border-radius:2.400px;background:#aaaaaa"></div><div class="abs" style="left:556.500px;top:148.300px;width:404px;height:313.200px;background:#fff;border:1px solid #cacaca;border-right:none;box-shadow:0 1px 3px rgba(0,0,0,.22)"></div><svg style="left:0;top:0" width="960.500" height="470" viewBox="0 0 960.500 470"><path d="M636 340.2 H929" stroke="#efefef" stroke-width="1"/><path d="M636 297.9 H929" stroke="#efefef" stroke-width="1"/><path d="M636 255.6 H929" stroke="#efefef" stroke-width="1"/><path d="M636 213.2 H929" stroke="#efefef" stroke-width="1"/><path d="M695.2 213 V382.6" stroke="#efefef" stroke-width="1"/><path d="M754.6 213 V382.6" stroke="#efefef" stroke-width="1"/><path d="M813.9 213 V382.6" stroke="#efefef" stroke-width="1"/><path d="M873.3 213 V382.6" stroke="#efefef" stroke-width="1"/><polyline points="635.9,358.8 640.8,360.1 645.8,367.3 650.7,377.4 655.7,376.8 660.6,376.0 665.6,374.7 670.5,374.2 675.5,372.6 680.4,371.3 685.4,372.1 690.3,372.6 695.2,372.9 700.2,373.6 705.1,370.7 710.1,370.5 715.0,369.9 720.0,369.4 724.9,368.9 729.9,368.6 734.8,368.1 739.7,367.3 744.7,367.6 749.6,368.1 754.6,369.9 759.5,369.7 764.5,366.8 769.4,367.6 774.4,367.0 779.3,367.3 784.2,368.9 789.2,368.6 794.1,367.8 799.1,367.6 804.0,368.1 809.0,368.6 813.9,368.9 818.9,368.9 823.8,366.2 828.8,367.8 833.7,366.0 838.6,367.6 843.6,368.9 848.5,368.4 853.5,367.6 858.4,367.3 863.4,367.8 868.3,368.6 873.3,369.4 878.2,369.4 883.1,368.1 888.1,368.1 893.0,367.3 898.0,368.6 902.9,369.4 907.9,369.7 912.8,367.6 917.8,366.0 922.7,367.8 927.7,368.1" fill="none" stroke="#f6b347" stroke-width="1.8" stroke-linejoin="round" stroke-linecap="round"/><polyline points="635.9,341.6 640.8,344.3 650.7,379.2 655.7,377.4 660.6,373.4 665.6,369.9 670.5,368.9 675.5,366.8 680.4,364.9 685.4,366.0 690.3,366.2 695.2,367.3 700.2,368.1 705.1,364.1 710.1,363.6 715.0,362.3 720.0,360.7 724.9,359.9 729.9,359.9 734.8,358.0 739.7,355.4 744.7,355.9 749.6,356.7 754.6,360.7 759.5,359.6 764.5,354.3 769.4,355.6 774.4,354.1 779.3,354.3 784.2,356.7 789.2,355.4 794.1,354.1 799.1,353.0 804.0,354.1 809.0,354.1 813.9,354.3 818.9,356.2 823.8,350.4 828.8,353.0 833.7,349.3 838.6,351.4 843.6,353.5 848.5,352.2 853.5,352.2 858.4,350.1 863.4,351.9 868.3,353.0 873.3,354.1 878.2,354.9 883.1,351.4 888.1,351.4 893.0,349.3 898.0,351.9 902.9,351.9 907.9,351.9 912.8,349.6 917.8,347.2 922.7,350.9 927.7,350.9" fill="none" stroke="#2f35ad" stroke-width="1.8" stroke-linejoin="round" stroke-linecap="round"/><polyline points="635.9,318.6 640.8,322.3 650.7,374.7 655.7,372.6 660.6,369.4 665.6,365.4 670.5,364.1 675.5,360.7 680.4,357.5 685.4,359.6 690.3,359.9 695.2,360.7 700.2,361.5 705.1,355.6 710.1,354.3 715.0,352.2 720.0,349.6 724.9,349.0 729.9,349.6 734.8,345.6 739.7,340.8 744.7,342.1 749.6,345.1 754.6,350.1 759.5,347.7 764.5,339.2 769.4,342.9 774.4,339.5 779.3,340.3 784.2,344.3 789.2,343.2 794.1,339.5 799.1,337.6 804.0,339.0 809.0,339.2 813.9,339.0 818.9,340.8 823.8,333.1 828.8,337.6 833.7,331.8 838.6,335.5 843.6,339.5 848.5,338.2 853.5,337.1 858.4,332.4 863.4,335.8 868.3,337.1 873.3,338.2 878.2,338.7 883.1,334.5 888.1,335.5 893.0,331.6 898.0,337.1 902.9,339.8 907.9,339.8 912.8,332.9 917.8,329.2 922.7,334.2 927.7,335.0" fill="none" stroke="#3ec6c9" stroke-width="1.8" stroke-linejoin="round" stroke-linecap="round"/><polyline points="635.9,220.6 640.8,228.6 650.7,372.1 655.7,369.4 660.6,360.1 665.6,351.7 670.5,348.2 675.5,341.6 680.4,335.8 685.4,340.3 690.3,340.6 695.2,342.9 700.2,345.1 705.1,332.4 710.1,329.2 715.0,322.3 720.0,313.3 724.9,310.4 729.9,311.2 734.8,301.9 739.7,290.8 744.7,290.5 749.6,294.0 754.6,315.1 759.5,305.9 764.5,285.2 769.4,287.4 774.4,283.4 779.3,282.1 784.2,290.0 789.2,286.8 794.1,278.1 799.1,270.9 804.0,276.8 809.0,273.6 813.9,280.7 818.9,285.2 823.8,266.7 828.8,271.5 833.7,261.4 838.6,268.3 843.6,274.6 848.5,272.0 853.5,270.1 858.4,258.2 863.4,264.3 868.3,263.5 873.3,273.6 878.2,274.6 883.1,263.5 888.1,263.0 893.0,256.1 898.0,266.2 902.9,268.3 907.9,270.1 912.8,258.8 917.8,246.3 922.7,259.6 927.7,255.6" fill="none" stroke="#a772dc" stroke-width="1.8" stroke-linejoin="round" stroke-linecap="round"/><path d="M636 382.6 H929" stroke="#cf3a5c" stroke-width="1.8"/><path d="M933 225.7 H960.500" stroke="#a772dc" stroke-width="1.800"/><path d="M933 244.7 H960.500" stroke="#3ec6c9" stroke-width="1.800"/><path d="M933 263.3 H960.500" stroke="#f6b347" stroke-width="1.800"/><path d="M933 282.3 H960.500" stroke="#cf3a5c" stroke-width="1.800"/><path d="M933 300.8 H960.500" stroke="#2f35ad" stroke-width="1.800"/></svg><div class="t" style="left:742px;top:167px;font-size:17.4px;letter-spacing:0.040px;color:#484848;">Orders by Region</div><div class="t" style="left:627.2px;top:377.3px;font-size:13.6px;letter-spacing:-0.564px;color:#484848;">0</div><div class="t" style="left:607.8000000000001px;top:334.95px;font-size:13.6px;letter-spacing:-0.019px;color:#484848;">20M</div><div class="t" style="left:607.8000000000001px;top:292.6px;font-size:13.6px;letter-spacing:-0.019px;color:#484848;">40M</div><div class="t" style="left:607.8000000000001px;top:250.25px;font-size:13.6px;letter-spacing:-0.019px;color:#484848;">60M</div><div class="t" style="left:607.8000000000001px;top:207.9px;font-size:13.6px;letter-spacing:-0.019px;color:#484848;">80M</div><div class="t" style="left:619.4px;top:384.8px;font-size:13.6px;letter-spacing:-0.414px;color:#484848;">Jan 1</div><div class="t" style="left:619.7px;top:400.6px;font-size:13.6px;letter-spacing:0.186px;color:#484848;">2020</div><div class="t" style="left:678.7px;top:384.8px;font-size:13.6px;letter-spacing:-0.414px;color:#484848;">Jan 1</div><div class="t" style="left:679.0px;top:400.6px;font-size:13.6px;letter-spacing:0.186px;color:#484848;">2021</div><div class="t" style="left:738.1px;top:384.8px;font-size:13.6px;letter-spacing:-0.414px;color:#484848;">Jan 1</div><div class="t" style="left:738.4px;top:400.6px;font-size:13.6px;letter-spacing:0.186px;color:#484848;">2022</div><div class="t" style="left:797.4px;top:384.8px;font-size:13.6px;letter-spacing:-0.414px;color:#484848;">Jan 1</div><div class="t" style="left:797.7px;top:400.6px;font-size:13.6px;letter-spacing:0.186px;color:#484848;">2023</div><div class="t" style="left:856.8px;top:384.8px;font-size:13.6px;letter-spacing:-0.414px;color:#484848;">Jan 1</div><div class="t" style="left:857.1px;top:400.6px;font-size:13.6px;letter-spacing:0.186px;color:#484848;">2024</div><div class="abs" style="left:960.500px;top:115px;width:15px;height:586px;background:#f7f7f7;border-left:1px solid #e6e6e6"></div><svg style="left:964px;top:118.500px" width="9" height="7" viewBox="0 0 9 7"><path d="M4.500 .5 L8.500 6.500 H.5 Z" fill="#c4c4c4"/></svg><svg style="left:964px;top:690px" width="9" height="7" viewBox="0 0 9 7"><path d="M4.500 6.500 L8.500 .5 H.5 Z" fill="#c4c4c4"/></svg><div class="abs" style="left:963.400px;top:132.400px;width:9.600px;height:42.200px;border-radius:4.800px;background:#c1c1c1"></div><div class="abs" style="left:0;top:700.500px;width:975.500px;height:14px;background:#f7f7f7;border-top:1px solid #e6e6e6"></div><svg style="left:2px;top:703.500px" width="7" height="9" viewBox="0 0 7 9"><path d="M.5 4.500 L6.500 .5 V8.500 Z" fill="#c4c4c4"/></svg><svg style="left:950px;top:703.500px" width="7" height="9" viewBox="0 0 7 9"><path d="M6.500 4.500 L.5 .5 V8.500 Z" fill="#c4c4c4"/></svg><div class="abs" style="left:15px;top:703.500px;width:367.500px;height:9.300px;border-radius:4.650px;background:#c1c1c1"></div><div class="abs" style="left:960.500px;top:700.500px;width:15px;height:14px;background:#f7f7f7;border-left:1px solid #e6e6e6"></div><div class="abs" style="left:975.300px;top:80px;width:368.700px;height:675px;background:#fff;border-left:2px solid #e0e0e0"></div><div class="t" style="left:1002.6px;top:105.27px;font-size:17.4px;font-weight:bold;letter-spacing:-0.034px;color:#111;">Configure connected table</div><svg style="left:1306px;top:107.700px" width="12" height="12" viewBox="0 0 12 12" fill="none" stroke="#1e1e1e" stroke-width="1.400" stroke-linecap="round"><path d="M1 1 L11 11 M11 1 L1 11"/></svg><div class="abs" style="left:1002.500px;top:147.400px;width:317.300px;height:140px;background:#fafafa;border:1px solid #e7e7e7;border-radius:3px"></div><div class="t" style="left:1020.3px;top:172.64px;font-size:17.2px;font-weight:bold;letter-spacing:-0.164px;color:#1a1a1a;">Orders by Region</div><svg style="left:1283.800px;top:173.300px" width="4" height="17" viewBox="0 0 4 17" fill="#1e1e1e"><circle cx="2" cy="2" r="1.400"/><circle cx="2" cy="8.400" r="1.400"/><circle cx="2" cy="14.900" r="1.400"/></svg><div class="t" style="left:1020.3px;top:206.84px;font-size:14.6px;letter-spacing:0.089px;color:#555;">120+ million row dataset of orders by</div><div class="t" style="left:1020.3px;top:225.54px;font-size:14.6px;letter-spacing:0.143px;color:#555;">region since 2020.</div><svg style="left:1019.900px;top:253.700px" width="16.400" height="16.400" viewBox="-8.500 -8.500 17 17" fill="none" stroke="#29b5e8" stroke-width="1.350" stroke-linecap="round" stroke-linejoin="round">
<path d="M0 -3.400 V-7.900 M-2.800 -7.500 L0 -3.900 L2.800 -7.500"/><path d="M0 -3.400 V-7.900 M-2.800 -7.500 L0 -3.900 L2.800 -7.500" transform="rotate(60)"/><path d="M0 -3.400 V-7.900 M-2.800 -7.500 L0 -3.900 L2.800 -7.500" transform="rotate(120)"/><path d="M0 -3.400 V-7.900 M-2.800 -7.500 L0 -3.900 L2.800 -7.500" transform="rotate(180)"/><path d="M0 -3.400 V-7.900 M-2.800 -7.500 L0 -3.900 L2.800 -7.500" transform="rotate(240)"/><path d="M0 -3.400 V-7.900 M-2.800 -7.500 L0 -3.900 L2.800 -7.500" transform="rotate(300)"/>
<rect x="-1" y="-1" width="2" height="2" transform="rotate(45)" fill="#29b5e8" stroke-width=".8"/></svg><div class="t" style="left:1045.3px;top:255.6px;font-size:13px;letter-spacing:0.069px;color:#8a8a8a;">Snowflake</div><div class="abs" style="left:1331px;top:150.800px;width:7px;height:288.400px;border-radius:3.500px;background:#c4c4c4"></div><div class="t" style="left:1003.2px;top:307.68px;font-size:12.9px;font-weight:bold;letter-spacing:-0.007px;color:#222;">Variables</div><div class="abs" style="left:1002.500px;top:326px;width:317.300px;height:36px;background:#fff;border:1px solid #e5e5e5;border-radius:3px"></div><div class="abs" style="left:1003.500px;top:327px;width:158.700px;height:34px;background:#f9f9f9;border-right:1px solid #e5e5e5;border-radius:3px 0 0 3px"></div><div class="t" style="left:1012.200px;top:338.200px;font-size:12px;letter-spacing:-.5px;color:#333">A<span style="font-size:11px">&#945;</span></div><div class="t" style="left:1035.3px;top:337.2px;font-size:13px;letter-spacing:-0.150px;color:#222;">Region</div><div class="t" style="left:1171.2px;top:337.2px;font-size:13px;letter-spacing:0.003px;color:#aaa;">Enter value</div><div class="abs" style="left:1002.500px;top:372.2px;width:317.300px;height:35.4px;background:#fff;border:1px solid #e5e5e5;border-radius:3px"></div><div class="abs" style="left:1003.500px;top:373.2px;width:158.700px;height:33.4px;background:#f9f9f9;border-right:1px solid #e5e5e5;border-radius:3px 0 0 3px"></div><svg style="left:1010.900px;top:383.200px" width="14.600" height="14" viewBox="0 0 15 15" fill="none" stroke="#333" stroke-width="1.200" stroke-linejoin="round" stroke-linecap="round">
<rect x="1" y="2.600" width="13" height="11.400" rx="1.400"/><path d="M1 6 H14 M4.400 .8 V4 M10.600 .8 V4"/><path d="M7 8.400 L7.800 8 V11.600 M6.800 11.600 H8.800" stroke-width="1"/></svg><div class="t" style="left:1035.3px;top:383.51px;font-size:13.1px;letter-spacing:-0.010px;color:#222;">Delivery Date</div><div class="t" style="left:1172.5px;top:384.34px;font-size:13.4px;letter-spacing:-0.031px;color:#222;font-family:'Liberation Mono',monospace;">2020-01-01</div><div class="t" style="left:1002.8px;top:427.65px;font-size:12.7px;font-weight:bold;letter-spacing:-0.076px;color:#222;">Columns</div><div class="abs" style="left:1002.500px;top:446.200px;width:317.300px;height:41.400px;background:#fff;border:1px solid #e5e5e5;border-radius:3px"></div><div class="abs" style="left:1007.400px;top:451.100px;width:151.700px;height:31.900px;background:#dedede;border-radius:3px"></div><div class="abs" style="left:1163.800px;top:451.100px;width:151.200px;height:31.900px;background:#f1f1f1;border-radius:3px"></div><div class="t" style="left:1048.5px;top:461.05px;font-size:12.7px;font-weight:bold;letter-spacing:-0.198px;color:#222;">All columns</div><div class="t" style="left:1187.5px;top:460.46px;font-size:13.4px;letter-spacing:0.172px;color:#8c8c8c;">Specific columns</div><div class="abs" style="left:1002.500px;top:488.800px;width:317.300px;height:3px;border:1px solid #ececec;border-bottom:none;border-radius:3px 3px 0 0"></div><div class="abs" style="left:977px;top:491px;width:367px;height:264px;background:#fff;border-top:1px solid #e3e3e3"></div><div class="abs" style="left:1113px;top:509.200px;width:97px;height:33px;background:#e9e9e9;border-radius:3px"></div><div class="t" style="left:1128.3px;top:519.17px;font-size:13.5px;font-weight:bold;letter-spacing:-0.051px;color:#222;">Run query</div><div class="t" style="left:1067.2px;top:561.9px;font-size:14.3px;letter-spacing:0.099px;color:#666;">Last refreshed 3 minutes ago</div><div class="t" style="left:1017.7px;top:592.58px;font-size:14.2px;letter-spacing:0.041px;color:#666;">Refreshes daily @ 6:00 am</div><div class="t" style="left:1207.8px;top:592.75px;font-size:14px;font-weight:bold;letter-spacing:-0.017px;color:#444;">View settings</div><div class="t" style="left:1004px;top:652.99px;font-size:16.9px;font-weight:bold;letter-spacing:0.033px;color:#1a1a1a;">Query complete</div><div class="t" style="left:1276.3px;top:654.32px;font-size:13.8px;letter-spacing:-0.447px;color:#222;">14.61</div><div class="t" style="left:1309.7px;top:653.98px;font-size:14.2px;letter-spacing:0.500px;color:#222;">s</div><div class="t" style="left:1004px;top:681.35px;font-size:14px;letter-spacing:0.105px;color:#333;">Rows loaded</div><div class="t" style="left:1230.2px;top:682.94px;font-size:13.4px;letter-spacing:0.004px;color:#222;font-family:'Liberation Mono',monospace;">120,853,305</div><div class="abs" style="left:979.600px;top:746px;width:354.200px;height:7.500px;border-radius:3.750px;background:#c0c0c0"></div><div class="abs" style="left:0;top:714.4px;width:976px;height:40.600px;background:#fdfdfd;border-top:1px solid #e3e3e3"></div><svg style="left:17.700px;top:729.500px" width="12.600" height="12.600" viewBox="0 0 12.600 12.600" fill="none" stroke="#1e1e1e" stroke-width="1.800" stroke-linecap="round"><path d="M6.300 .8 V11.800 M.8 6.300 H11.800"/></svg><svg style="left:62px;top:729.800px" width="16.200" height="12" viewBox="0 0 16.200 12" fill="none" stroke="#1e1e1e" stroke-width="1.900" stroke-linecap="round"><path d="M.8 .9 H15.400 M.8 6 H15.400 M.8 11.100 H15.400"/></svg><div class="abs" style="left:93.300px;top:720.200px;width:132.600px;height:31.100px;background:#e5e5e5;border-radius:2px"></div><div class="t" style="left:110.5px;top:728.84px;font-size:14.6px;letter-spacing:0.117px;color:#222;">Order Tracking</div><div class="t" style="left:799.9px;top:722.17px;font-size:11.5px;font-weight:bold;letter-spacing:0.132px;color:#4a4a4a;">Table Updated</div><div class="t" style="left:803.4px;top:736.94px;font-size:12px;letter-spacing:0.094px;color:#444;">4 minutes ago</div><div class="t" style="left:903.5px;top:722.17px;font-size:11.5px;font-weight:bold;letter-spacing:-0.025px;color:#4a4a4a;">Table Rows</div><div class="t" style="left:893.6px;top:736.77px;font-size:12.2px;letter-spacing:0.441px;color:#444;">120,853,305</div></div></body></html>
